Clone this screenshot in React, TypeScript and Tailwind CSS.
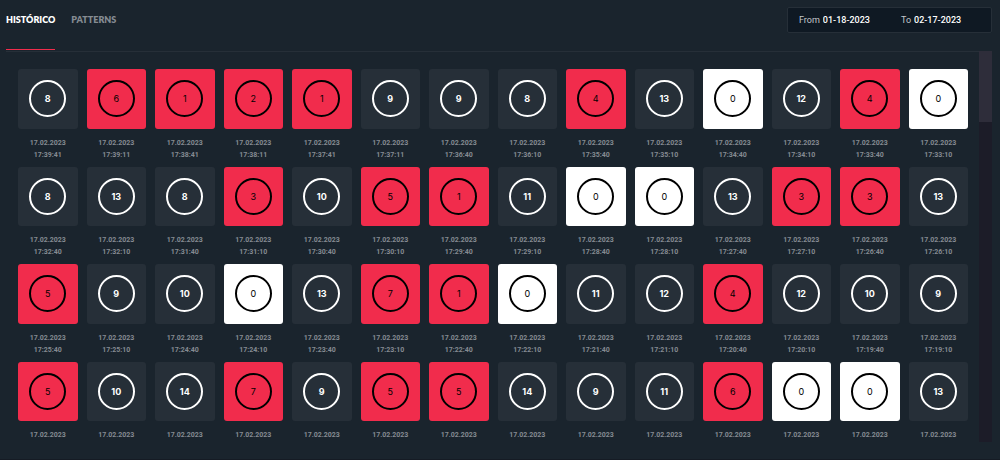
import React, { useState } from "react";

type Roll = { value: number; time?: string };

const DATE = "17.02.2023";

const ROWS: [number, string?][][] = [
  [
    [8, "17:39:41"], [6, "17:39:11"], [1, "17:38:41"], [2, "17:38:11"], [1, "17:37:41"], [9, "17:37:11"], [9, "17:36:40"],
    [8, "17:36:10"], [4, "17:35:40"], [13, "17:35:10"], [0, "17:34:40"], [12, "17:34:10"], [4, "17:33:40"], [0, "17:33:10"],
  ],
  [
    [8, "17:32:40"], [13, "17:32:10"], [8, "17:31:40"], [3, "17:31:10"], [10, "17:30:40"], [5, "17:30:10"], [1, "17:29:40"],
    [11, "17:29:10"], [0, "17:28:40"], [0, "17:28:10"], [13, "17:27:40"], [3, "17:27:10"], [3, "17:26:40"], [13, "17:26:10"],
  ],
  [
    [5, "17:25:40"], [9, "17:25:10"], [10, "17:24:40"], [0, "17:24:10"], [13, "17:23:40"], [7, "17:23:10"], [1, "17:22:40"],
    [0, "17:22:10"], [11, "17:21:40"], [12, "17:21:10"], [4, "17:20:40"], [12, "17:20:10"], [10, "17:19:40"], [9, "17:19:10"],
  ],
  [[5], [10], [14], [7], [9], [5], [5], [14], [9], [11], [6], [0], [0], [13]],
];

const ROLLS: Roll[] = ROWS.flat().map(([value, time]) => ({ value, time }));

function tileClass(value: number) {
  if (value === 0) return "bg-white text-black font-normal";
  if (value <= 7) return "bg-[#f12c4c] text-black font-normal";
  return "bg-[#262f38] text-white font-bold";
}

function Tile({ value, time }: Roll) {
  return (
    <li className="flex flex-col">
      <div className={`flex aspect-square items-center justify-center rounded-[3px] ${tileClass(value)}`}>
        <span className="flex size-[37px] items-center justify-center rounded-full border-2 border-current font-['Inter',sans-serif] text-[9px] leading-none">
          {value}
        </span>
      </div>
      <div className="pt-2 pb-1.5 text-center text-[7px] leading-3 font-bold text-[#858b92]">
        <div>{DATE}</div>
        {time && <div>{time}</div>}
      </div>
    </li>
  );
}

function DateField({ id, label, initial }: { id: string; label: string; initial: string }) {
  const [value, setValue] = useState(initial);
  return (
    <div className="flex items-center gap-[3px]">
      <label htmlFor={id} className="text-[#c3c7cb]">{label}</label>
      <input
        id={id}
        type="text"
        value={value}
        onChange={(e) => setValue(e.target.value)}
        className="w-full min-w-0 bg-transparent font-medium text-white outline-none"
      />
    </div>
  );
}

function Tab({ active, onClick, children }: { active: boolean; onClick: () => void; children: React.ReactNode }) {
  return (
    <button
      type="button"
      role="tab"
      aria-selected={active}
      onClick={onClick}
      className={`flex h-[50px] flex-col justify-between pt-3.5 text-[9px] leading-3 font-extrabold ${
        active ? "text-white" : "text-[#858b92]"
      }`}
    >
      {children}
      <span className={`block h-px w-full ${active ? "bg-[#f12c4c]" : "bg-transparent"}`} />
    </button>
  );
}

export default function App() {
  const [tab, setTab] = useState<"history" | "patterns">("history");
  return (
    <main className="flex h-screen flex-col border-b border-[#151b24] bg-[#1a242d] pr-2 pb-[17px] pl-1.5 font-['Lato',sans-serif]">
      <header className="flex items-start justify-between pb-px">
        <div role="tablist" className="flex gap-4">
          <Tab active={tab === "history"} onClick={() => setTab("history")}>HISTÓRICO</Tab>
          <Tab active={tab === "patterns"} onClick={() => setTab("patterns")}>PATTERNS</Tab>
        </div>
        <div className="mt-[7px] grid h-[26px] w-[205px] grid-cols-2 items-center gap-3 rounded-[2px] border border-[#262f38] bg-[#0f1923] pl-[11px] font-['Roboto',sans-serif] text-[9px] leading-3">
          <DateField id="from" label="From" initial="01-18-2023" />
          <DateField id="to" label="To" initial="02-17-2023" />
        </div>
      </header>
      <section className="flex min-h-0 flex-1">
        <div className="min-w-0 flex-1 overflow-hidden border-t border-[#262f38] pt-[17px] pr-[11px] pl-3">
          <ul className="grid grid-cols-14 gap-x-[9px] font-['Roboto',sans-serif]">
            {ROLLS.map((roll, i) => (
              <Tile key={i} {...roll} />
            ))}
          </ul>
        </div>
        <div aria-hidden="true" className="w-[13px] bg-[#1c1c28]">
          <div className="h-[71px] bg-[#2e2d3a]" />
        </div>
      </section>
    </main>
  );
}
